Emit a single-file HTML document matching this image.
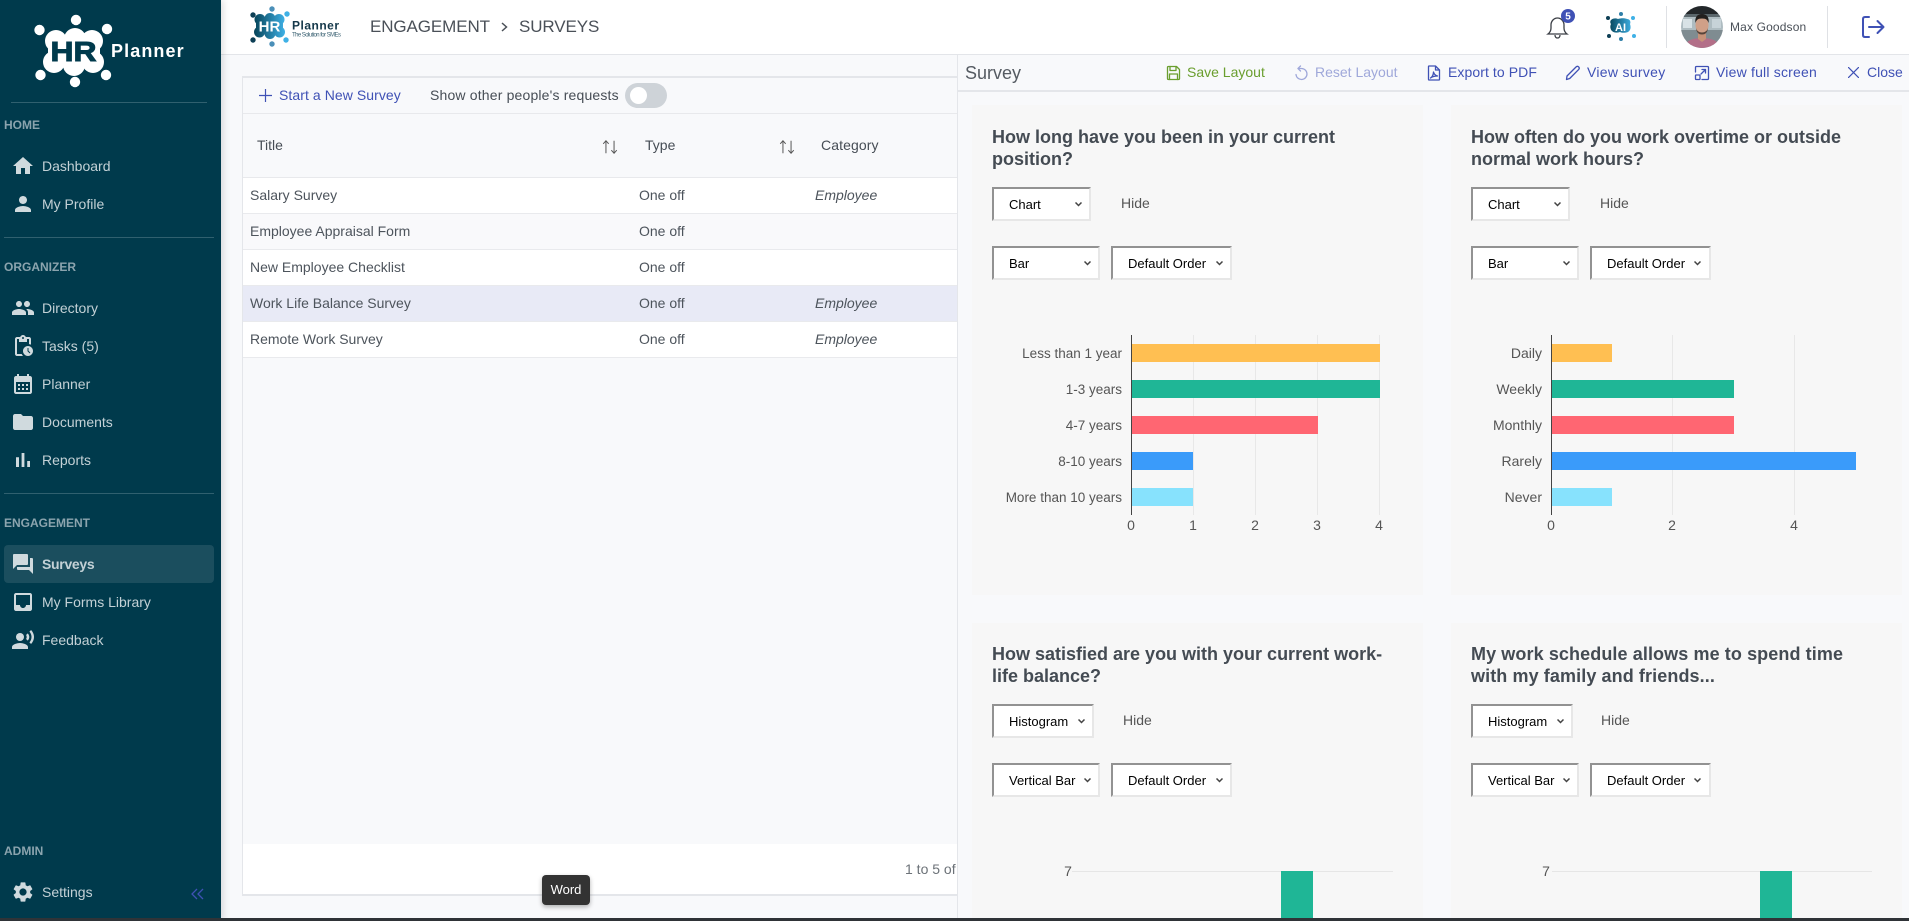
<!DOCTYPE html>
<html lang="en"><head><meta charset="utf-8"><title>Surveys</title>
<style>
html,body{margin:0;padding:0;width:1909px;height:921px;overflow:hidden;background:#f8f9fb;font-family:"Liberation Sans",Arial,sans-serif;}
.a{position:absolute}
.t{position:absolute;white-space:nowrap;line-height:20px;height:20px}
#side{left:0;top:0;width:221px;height:921px;background:#003a4c;box-shadow:2px 0 7px rgba(0,0,0,.14);z-index:5}
.lab{font-size:12px;font-weight:bold;color:#8ba4ae;left:4px}
.nav{font-size:14px;color:#c3d1d6;left:42px}
.ic{position:absolute;left:11px;width:24px;height:24px;fill:#d0dade}
.sep{position:absolute;height:1px;background:#30606f}
#head{left:221px;top:0;width:1688px;height:54px;background:#fff;border-bottom:1px solid #e3e5e9;z-index:3}
#tcard{left:242px;top:76px;width:716px;height:820px;background:#f8f9fb;border:solid #e4e6ea;border-width:2px 0 2px 1px;box-sizing:border-box}
.row{position:absolute;left:243px;width:714px;background:#fff;border-bottom:1px solid #e9eaed;box-sizing:border-box}
.cell{font-size:14px;color:#4d545c}
.act{font-size:14px;top:62px;color:#3f51b5}
.card{position:absolute;background:#f7f7f7;width:451px}
.q{position:absolute;font-size:18px;font-weight:bold;color:#444b53;line-height:22px;white-space:nowrap}
select{position:absolute;box-sizing:border-box;background:#fff;color:#000;font:13px "Liberation Sans",Arial,sans-serif;border:2px solid;border-color:#929292 #e7e7e7 #e7e7e7 #929292;border-radius:0;padding:0 0 0 15px;margin:0;outline:0;appearance:none;-webkit-appearance:none}
.ch{position:absolute;width:7px;height:5px;fill:none;stroke:#444;stroke-width:1.500}
.hide{font-size:14px;color:#555}
svg{display:block}
.tb{position:absolute;fill:none;stroke-width:1.3;stroke-linecap:round;stroke-linejoin:round}
</style></head><body>

<div id="side" class="a">
 <svg class="a" style="left:30px;top:12px" width="165" height="76" viewBox="0 0 165 76">
  <g fill="#fff">
   <circle cx="9.500" cy="18" r="5.200"/><circle cx="46" cy="8" r="5.200"/><circle cx="77" cy="17" r="5.200"/>
   <circle cx="76" cy="63" r="5.200"/><circle cx="45" cy="70" r="5.200"/><circle cx="10.500" cy="63" r="5.200"/>
   <circle cx="26" cy="29" r="11"/><circle cx="45" cy="27" r="11"/><circle cx="62" cy="29" r="11"/>
   <circle cx="24" cy="50" r="11"/><circle cx="44" cy="53" r="11"/><circle cx="63" cy="50" r="11"/>
   <rect x="18" y="28" width="52" height="24"/>
  </g>
  <text x="43.500" y="49" text-anchor="middle" font-family="Liberation Sans" font-weight="bold" font-size="28" fill="#003a4c" stroke="#003a4c" stroke-width="1" textLength="46" lengthAdjust="spacingAndGlyphs">HR</text>
  <text x="81" y="45" font-family="Liberation Sans" font-weight="bold" font-size="18" fill="#fff" letter-spacing="1.100">Planner</text>
 </svg>
 <div class="sep" style="left:11px;width:196px;top:102px"></div>

 <div class="t lab" style="top:115px">HOME</div>
 <svg class="ic" style="top:154px" viewBox="0 0 24 24"><path d="M10 20v-6h4v6h5v-8h3L12 3 2 12h3v8z"/></svg>
 <div class="t nav" style="top:156px">Dashboard</div>
 <svg class="ic" style="top:192px" viewBox="0 0 24 24"><path d="M12 12c2.210 0 4-1.790 4-4s-1.790-4-4-4-4 1.790-4 4 1.790 4 4 4zm0 2c-2.670 0-8 1.340-8 4v2h16v-2c0-2.660-5.330-4-8-4z"/></svg>
 <div class="t nav" style="top:194px">My Profile</div>
 <div class="sep" style="left:4px;width:210px;top:237px"></div>

 <div class="t lab" style="top:257px">ORGANIZER</div>
 <svg class="ic" style="top:296px" viewBox="0 0 24 24"><path d="M16 11c1.660 0 2.990-1.340 2.990-3S17.660 5 16 5c-1.660 0-3 1.340-3 3s1.340 3 3 3zm-8 0c1.660 0 2.990-1.340 2.990-3S9.660 5 8 5C6.340 5 5 6.340 5 8s1.340 3 3 3zm0 2c-2.330 0-7 1.170-7 3.500V19h14v-2.500c0-2.330-4.670-3.500-7-3.500zm8 0c-.29 0-.62.020-.97.050 1.160.84 1.970 1.970 1.970 3.450V19h6v-2.500c0-2.330-4.670-3.500-7-3.500z"/></svg>
 <div class="t nav" style="top:298px">Directory</div>
 <svg class="ic" style="top:334px" viewBox="0 0 24 24"><path d="M17,12c-2.760,0-5,2.240-5,5s2.240,5,5,5c2.760,0,5-2.240,5-5S19.760,12,17,12z M18.650,19.350l-2.150-2.150V14h1v2.790l1.850,1.850 L18.650,19.350z M18,3h-3.180C14.400,1.840,13.300,1,12,1S9.600,1.840,9.180,3H6C4.900,3,4,3.900,4,5v15c0,1.100,0.900,2,2,2h6.110 c-0.590-0.570-1.070-1.250-1.420-2H6V5h2v3h8V5h2v5.080c0.710,0.100,1.380,0.310,2,0.600V5C20,3.900,19.100,3,18,3z M12,5c-0.550,0-1-0.450-1-1 c0-0.550,0.450-1,1-1c0.550,0,1,0.450,1,1C13,4.550,12.550,5,12,5z"/></svg>
 <div class="t nav" style="top:336px">Tasks (5)</div>
 <svg class="ic" style="top:372px" viewBox="0 0 24 24"><path d="M19 4h-1V2h-2v2H8V2H6v2H5c-1.110 0-1.990.9-1.990 2L3 20c0 1.100.89 2 2 2h14c1.100 0 2-.9 2-2V6c0-1.100-.9-2-2-2zm0 16H5V10h14v10zM9 14H7v-2h2v2zm4 0h-2v-2h2v2zm4 0h-2v-2h2v2zm-8 4H7v-2h2v2zm4 0h-2v-2h2v2zm4 0h-2v-2h2v2z"/></svg>
 <div class="t nav" style="top:374px">Planner</div>
 <svg class="ic" style="top:410px" viewBox="0 0 24 24"><path d="M10 4H4c-1.100 0-1.990.9-1.990 2L2 18c0 1.100.9 2 2 2h16c1.100 0 2-.9 2-2V8c0-1.100-.9-2-2-2h-8l-2-2z"/></svg>
 <div class="t nav" style="top:412px">Documents</div>
 <svg class="ic" style="top:448px" viewBox="0 0 24 24"><path d="M5 9.200h3V19H5zM10.600 5h2.800v14h-2.800zm5.600 8H19v6h-2.800z"/></svg>
 <div class="t nav" style="top:450px">Reports</div>
 <div class="sep" style="left:4px;width:210px;top:493px"></div>

 <div class="t lab" style="top:513px">ENGAGEMENT</div>
 <div class="a" style="left:4px;top:545px;width:210px;height:38px;background:#1b4e5e;border-radius:4px"></div>
 <svg class="ic" style="top:552px" viewBox="0 0 24 24"><path d="M21 6h-2v9H6v2c0 .55.45 1 1 1h11l4 4V7c0-.55-.45-1-1-1zm-4 6V3c0-.55-.45-1-1-1H3c-.55 0-1 .45-1 1v14l4-4h10c.55 0 1-.45 1-1z"/></svg>
 <div class="t nav" style="top:554px;font-weight:bold;letter-spacing:-.3px">Surveys</div>
 <svg class="ic" style="top:590px" viewBox="0 0 24 24"><path d="M19 3H4.990c-1.110 0-1.980.89-1.980 2L3 19c0 1.100.88 2 1.990 2H19c1.100 0 2-.9 2-2V5c0-1.110-.9-2-2-2zm0 12h-4c0 1.660-1.350 3-3 3s-3-1.340-3-3H4.990V5H19v10z"/></svg>
 <div class="t nav" style="top:592px">My Forms Library</div>
 <svg class="ic" style="top:628px" viewBox="0 0 24 24"><circle cx="9" cy="9" r="4"/><path d="M9 15c-2.670 0-8 1.340-8 4v2h16v-2c0-2.660-5.330-4-8-4zm7.760-9.640l-1.680 1.690c.84 1.180.84 2.710 0 3.890l1.680 1.690c2.020-2.020 2.020-5.070 0-7.270zM20.070 2l-1.630 1.630c2.770 3.020 2.770 7.560 0 10.740L20.070 16c3.900-3.890 3.910-9.950 0-14z"/></svg>
 <div class="t nav" style="top:630px">Feedback</div>

 <div class="t lab" style="top:841px">ADMIN</div>
 <svg class="ic" style="top:880px" viewBox="0 0 24 24"><path d="M19.140 12.940c.04-.3.060-.61.060-.94 0-.32-.02-.64-.07-.94l2.030-1.580c.18-.14.23-.41.120-.61l-1.920-3.320c-.12-.22-.37-.29-.59-.22l-2.390.96c-.5-.38-1.030-.7-1.620-.94l-.36-2.540c-.04-.24-.24-.41-.48-.41h-3.840c-.24 0-.43.170-.47.410l-.36 2.540c-.59.240-1.130.570-1.620.940l-2.390-.96c-.22-.08-.47 0-.59.220L2.740 8.870c-.12.210-.08.470.12.610l2.030 1.580c-.05.3-.09.630-.09.940s.020.640.07.940l-2.030 1.580c-.18.140-.23.410-.12.610l1.920 3.320c.12.220.37.290.59.220l2.390-.96c.5.380 1.030.7 1.620.94l.36 2.540c.05.240.24.410.48.410h3.840c.24 0 .44-.17.47-.41l.36-2.540c.59-.24 1.130-.56 1.620-.94l2.390.96c.22.080.47 0 .59-.22l1.920-3.320c.12-.22.070-.47-.12-.61l-2.010-1.580zM12 15.600c-1.980 0-3.600-1.620-3.600-3.600s1.620-3.600 3.600-3.600 3.600 1.620 3.600 3.600-1.620 3.600-3.600 3.600z"/></svg>
 <div class="t nav" style="top:882px">Settings</div>
 <svg class="a" style="left:191px;top:888px" width="13" height="12" viewBox="0 0 13 12" fill="none" stroke="#3f51b5" stroke-width="1.300"><path d="M6 1L1 6l5 5M12 1L7 6l5 5"/></svg>
</div>

<div id="head" class="a">
 <svg class="a" style="left:27px;top:4px" width="100" height="46" viewBox="0 0 100 46">
  <defs><linearGradient id="g" gradientUnits="userSpaceOnUse" x1="6" x2="37" y1="0" y2="0"><stop offset="0" stop-color="#064459"/><stop offset="1" stop-color="#3fb1e6"/></linearGradient></defs>
  <circle cx="5" cy="11" r="2.700" fill="#0d3f55"/><circle cx="24" cy="5" r="2.700" fill="#4a8fb8"/><circle cx="39" cy="10" r="2.700" fill="#3fb1e6"/>
  <circle cx="38" cy="36" r="2.700" fill="#3fb1e6"/><circle cx="24" cy="40" r="2.700" fill="#4a8fb8"/><circle cx="5" cy="36" r="2.700" fill="#0d3f55"/>
  <g fill="url(#g)"><circle cx="12" cy="15.500" r="5.500"/><circle cx="22" cy="14.500" r="5.500"/><circle cx="31" cy="15.500" r="5.500"/><circle cx="11.500" cy="28" r="5.500"/><circle cx="22" cy="29.500" r="5.500"/><circle cx="31.500" cy="28" r="5.500"/><rect x="8" y="14" width="27" height="16"/></g>
  <text x="21.500" y="27.500" text-anchor="middle" font-family="Liberation Sans" font-weight="bold" font-size="15" fill="#fff">HR</text>
  <text x="44" y="25.500" font-family="Liberation Sans" font-weight="bold" font-size="12" fill="#14384a" letter-spacing=".5">Planner</text>
  <text x="44" y="32.500" font-family="Liberation Sans" font-size="6" fill="#3b6273" textLength="49">The Solution for SMEs</text>
 </svg>
 <div class="t" style="left:149px;top:17px;font-size:17px;letter-spacing:-.1px;color:#4a5058">ENGAGEMENT</div>
 <svg class="a" style="left:279px;top:21px" width="9" height="12" viewBox="0 0 9 12" fill="none" stroke="#4a5058" stroke-width="1.500"><path d="M2 2l4.500 4L2 10"/></svg>
 <div class="t" style="left:298px;top:17px;font-size:17px;letter-spacing:-.1px;color:#4a5058">SURVEYS</div>

 <svg class="a" style="left:1324px;top:14px" width="26" height="26" viewBox="0 0 26 26" fill="none" stroke="#3b3f46" stroke-width="1.300"><path d="M3 20c2-1.500 3-3 3-6v-3c0-4 3-7 6.500-7s6.500 3 6.500 7v3c0 3 1 4.500 3 6z"/><path d="M10 21c0 2 1.200 3 2.500 3s2.500-1 2.500-3"/></svg>
 <svg class="a" style="left:1339px;top:8px" width="16" height="16" viewBox="0 0 16 16"><circle cx="8" cy="8" r="7" fill="#3f51b5"/><text x="8" y="11.500" text-anchor="middle" font-family="Liberation Sans" font-weight="bold" font-size="10" fill="#fff">5</text></svg>
 <svg class="a" style="left:1383px;top:11px" width="34" height="32" viewBox="0 0 34 32">
  <defs><linearGradient id="g2" gradientUnits="userSpaceOnUse" x1="5" x2="28" y1="0" y2="0"><stop offset="0" stop-color="#064459"/><stop offset="1" stop-color="#3fb1e6"/></linearGradient></defs>
  <circle cx="4" cy="7" r="2" fill="#0d3f55"/><circle cx="17" cy="3" r="2" fill="#2f7fa8"/><circle cx="29" cy="7" r="2" fill="#3fb1e6"/><circle cx="30" cy="25" r="2" fill="#3fb1e6"/><circle cx="17" cy="28" r="2" fill="#2f7fa8"/><circle cx="5" cy="25" r="2" fill="#0d3f55"/>
  <path fill="url(#g2)" d="M7 9c2-2 5-2 7-1 3-1 7-1 9 0 3 0 4 3 3 5 1 3 1 6-2 8-3 1-6 1-8 0-3 1-6 1-8-1-2-2-2-5-1-7-1-1-1-3 0-4z"/>
  <text x="16.500" y="20" text-anchor="middle" font-family="Liberation Sans" font-weight="bold" font-size="11" fill="#fff">AI</text>
 </svg>
 <div class="a" style="left:1445px;top:6px;width:1px;height:42px;background:#dfe1e5"></div>
 <svg class="a" style="left:1460px;top:6px" width="42" height="42" viewBox="0 0 42 42">
  <defs><clipPath id="c"><circle cx="21" cy="21" r="21"/></clipPath></defs>
  <g clip-path="url(#c)">
   <rect width="42" height="42" fill="#aebcc1"/>
   <rect width="42" height="8" fill="#23272a"/>
   <rect x="0" y="8" width="42" height="3" fill="#5b676c"/>
   <rect x="2" y="13" width="9" height="9" fill="#d8e2e6"/><rect x="31" y="13" width="9" height="9" fill="#c7d3d8"/>
   <rect x="0" y="24" width="42" height="18" fill="#7f8c91"/>
   <path d="M3 42c1-7 8-10 18-10s17 3 18 10z" fill="#b36f88"/>
   <path d="M17 26h8v7l-4 3-4-3z" fill="#c69279"/>
   <ellipse cx="21" cy="19" rx="6.500" ry="9" fill="#d0a088"/>
   <path d="M14.500 17c-1-6 2-9 6.500-9s7.500 3 6.500 9c-1-3-2-4.500-6.500-4.500s-5.500 1.500-6.500 4.500z" fill="#23201e"/>
   <path d="M15 22c1.500 6 10.500 6 12 0-.5 5-3 6.500-6 6.500s-5.500-1.500-6-6.500z" fill="#57443a"/>
  </g>
 </svg>
 <div class="t" style="left:1509px;top:17px;font-size:12px;letter-spacing:.15px;color:#4a5058">Max Goodson</div>
 <div class="a" style="left:1606px;top:6px;width:1px;height:42px;background:#dfe1e5"></div>
 <svg class="a" style="left:1640px;top:15px" width="25" height="24" viewBox="0 0 25 24" fill="none" stroke="#3f51b5" stroke-width="2" stroke-linecap="round" stroke-linejoin="round"><path d="M8 2H4c-1.500 0-2 .8-2 2v16c0 1.200.5 2 2 2h4"/><path d="M8 12h14M16.500 6l6 6-6 6"/></svg>
</div>

<div id="tcard" class="a"></div>
<svg class="a" style="left:258px;top:88px" width="15" height="15" viewBox="0 0 15 15" stroke="#3f51b5" stroke-width="1.200"><path d="M7.500 1v13M1 7.500h13"/></svg>
<div class="t" style="left:279px;top:85px;font-size:14px;letter-spacing:.07px;color:#3f51b5">Start a New Survey</div>
<div class="t" style="left:430px;top:85px;font-size:14px;letter-spacing:.17px;color:#464d55">Show other people's requests</div>
<div class="a" style="left:625px;top:83px;width:42px;height:25px;border-radius:13px;background:#ced3d8"></div>
<div class="a" style="left:630px;top:87px;width:17px;height:17px;border-radius:50%;background:#fff"></div>
<div class="a" style="left:243px;top:113px;width:714px;height:1px;background:#e8e9ec"></div>
<div class="a" style="left:243px;top:177px;width:714px;height:1px;background:#e8e9ec"></div>
<div class="t" style="left:257px;top:135px;font-size:14px;color:#464d55">Title</div>
<div class="t" style="left:645px;top:135px;font-size:14px;color:#464d55">Type</div>
<div class="t" style="left:821px;top:135px;font-size:14px;letter-spacing:.1px;color:#464d55">Category</div>
<svg class="a" style="left:601px;top:138px" width="18" height="18" viewBox="0 0 20 18" fill="none" stroke="#555" stroke-width="1.100"><path d="M5.500 16V2.500M2.500 5.500l3-3.500 3 3.500M14.500 2v13.500M11.500 12.500l3 3.500 3-3.500"/></svg>
<svg class="a" style="left:778px;top:138px" width="18" height="18" viewBox="0 0 20 18" fill="none" stroke="#555" stroke-width="1.100"><path d="M5.500 16V2.500M2.500 5.500l3-3.500 3 3.500M14.500 2v13.500M11.500 12.500l3 3.500 3-3.500"/></svg>

<div class="row" style="top:178px;height:36px"></div>
<div class="row" style="top:214px;height:36px;background:#f9f9fb"></div>
<div class="row" style="top:250px;height:36px"></div>
<div class="row" style="top:286px;height:36px;background:#e8eaf6"></div>
<div class="row" style="top:322px;height:36px"></div>
<div class="t cell" style="left:250px;top:185px">Salary Survey</div><div class="t cell" style="left:639px;top:185px">One off</div><div class="t cell" style="left:815px;top:185px;font-style:italic">Employee</div>
<div class="t cell" style="left:250px;top:221px">Employee Appraisal Form</div><div class="t cell" style="left:639px;top:221px">One off</div>
<div class="t cell" style="left:250px;top:257px">New Employee Checklist</div><div class="t cell" style="left:639px;top:257px">One off</div>
<div class="t cell" style="left:250px;top:293px">Work Life Balance Survey</div><div class="t cell" style="left:639px;top:293px">One off</div><div class="t cell" style="left:815px;top:293px;font-style:italic">Employee</div>
<div class="t cell" style="left:250px;top:329px">Remote Work Survey</div><div class="t cell" style="left:639px;top:329px">One off</div><div class="t cell" style="left:815px;top:329px;font-style:italic">Employee</div>
<div class="a" style="left:243px;top:844px;width:714px;height:50px;background:#fff"></div>
<div class="t" style="left:905px;top:859px;font-size:14px;color:#6c7278">1 to 5 of</div>

<div class="a" style="left:957px;top:55px;width:952px;height:866px;background:#f8f9fb;border-left:1px solid #e4e6ea;box-sizing:border-box"></div>
<div class="a" style="left:957px;top:90px;width:952px;height:2px;background:#e4e6ea"></div>
<div class="t" style="left:965px;top:63px;font-size:18px;color:#555b62">Survey</div>

<svg class="tb" style="left:1166px;top:65px;stroke:#6a9e2e" width="15" height="16" viewBox="0 0 15 16"><path d="M2.500 1.500h8l3 3v9c0 .6-.4 1-1 1h-10c-.6 0-1-.4-1-1v-11c0-.6.4-1 1-1z"/><path d="M4 1.500v4h6v-4M3.500 14.500V9h8v5.500"/></svg>
<div class="t act" style="left:1187px;color:#6a9e2e">Save Layout</div>
<svg class="tb" style="left:1294px;top:65px;stroke:#9fa8da" width="15" height="16" viewBox="0 0 15 16"><path d="M6.500 1L4 3.500 6.500 6"/><path d="M4 3.500h3.500a5.500 5.500 0 1 1-5.500 6"/></svg>
<div class="t act" style="left:1315px;color:#9fa8da">Reset Layout</div>
<svg class="tb" style="left:1427px;top:65px;stroke:#3f51b5" width="14" height="16" viewBox="0 0 14 16"><path d="M2 1h6.500L12.500 5v9.500c0 .3-.2.5-.5.5H2c-.3 0-.5-.2-.5-.5v-13c0-.3.2-.5.5-.5zM8.500 1v4h4"/><path d="M3.500 13c2-1 3-4 3-6 .5 2 2 3.500 4 4-2 0-5 .5-7 2z"/></svg>
<div class="t act" style="left:1448px;letter-spacing:.08px">Export to PDF</div>
<svg class="tb" style="left:1565px;top:65px;stroke:#3f51b5" width="16" height="16" viewBox="0 0 16 16"><path d="M2 11L11 2c1-1 2-.8 2.700-.1s.8 1.700-.1 2.700L4.700 13.500 1.500 14.500z"/></svg>
<div class="t act" style="left:1587px;letter-spacing:.3px">View survey</div>
<svg class="tb" style="left:1694px;top:65px;stroke:#3f51b5" width="16" height="16" viewBox="0 0 16 16"><path d="M1.500 7V2.500c0-.6.4-1 1-1h11c.6 0 1 .4 1 1v11c0 .6-.4 1-1 1H8"/><path d="M7 9l4.500-4.500M8 4.500h3.500V8"/><rect x="1.500" y="10" width="4.500" height="4.500" rx=".5"/></svg>
<div class="t act" style="left:1716px;letter-spacing:.2px">View full screen</div>
<svg class="tb" style="left:1848px;top:67px;stroke:#3f51b5" width="11" height="11" viewBox="0 0 12 12"><path d="M.5.500l11 11M11.500.500l-11 11"/></svg>
<div class="t act" style="left:1867px">Close</div>

<div class="card" style="left:972px;top:105px;height:490px"></div>
<div class="card" style="left:1451px;top:105px;height:490px"></div>
<div class="card" style="left:972px;top:623px;height:298px"></div>
<div class="card" style="left:1451px;top:623px;height:298px"></div>

<div class="q" style="left:992px;top:126px">How long have you been in your current<br>position?</div>
<select style="left:992px;top:187px;width:99px;height:34px"><option>Chart</option></select>
<svg class="ch" style="left:1075px;top:202px" viewBox="0 0 7 5"><path d="M.5.500l3 3 3-3"/></svg>
<div class="t hide" style="left:1121px;top:193px">Hide</div>
<select style="left:992px;top:246px;width:108px;height:34px"><option>Bar</option></select>
<svg class="ch" style="left:1084px;top:261px" viewBox="0 0 7 5"><path d="M.5.500l3 3 3-3"/></svg>
<select style="left:1111px;top:246px;width:121px;height:34px"><option>Default Order</option></select>
<svg class="ch" style="left:1216px;top:261px" viewBox="0 0 7 5"><path d="M.5.500l3 3 3-3"/></svg>

<div class="q" style="left:1471px;top:126px">How often do you work overtime or outside<br>normal work hours?</div>
<select style="left:1471px;top:187px;width:99px;height:34px"><option>Chart</option></select>
<svg class="ch" style="left:1554px;top:202px" viewBox="0 0 7 5"><path d="M.5.500l3 3 3-3"/></svg>
<div class="t hide" style="left:1600px;top:193px">Hide</div>
<select style="left:1471px;top:246px;width:108px;height:34px"><option>Bar</option></select>
<svg class="ch" style="left:1563px;top:261px" viewBox="0 0 7 5"><path d="M.5.500l3 3 3-3"/></svg>
<select style="left:1590px;top:246px;width:121px;height:34px"><option>Default Order</option></select>
<svg class="ch" style="left:1694px;top:261px" viewBox="0 0 7 5"><path d="M.5.500l3 3 3-3"/></svg>

<div class="q" style="left:992px;top:643px">How satisfied are you with your current work-<br>life balance?</div>
<select style="left:992px;top:704px;width:102px;height:34px"><option>Histogram</option></select>
<svg class="ch" style="left:1078px;top:719px" viewBox="0 0 7 5"><path d="M.5.500l3 3 3-3"/></svg>
<div class="t hide" style="left:1123px;top:710px">Hide</div>
<select style="left:992px;top:763px;width:108px;height:34px"><option>Vertical Bar</option></select>
<svg class="ch" style="left:1084px;top:778px" viewBox="0 0 7 5"><path d="M.5.500l3 3 3-3"/></svg>
<select style="left:1111px;top:763px;width:121px;height:34px"><option>Default Order</option></select>
<svg class="ch" style="left:1216px;top:778px" viewBox="0 0 7 5"><path d="M.5.500l3 3 3-3"/></svg>

<div class="q" style="left:1471px;top:643px;letter-spacing:.1px">My work schedule allows me to spend time<br>with my family and friends...</div>
<select style="left:1471px;top:704px;width:102px;height:34px"><option>Histogram</option></select>
<svg class="ch" style="left:1557px;top:719px" viewBox="0 0 7 5"><path d="M.5.500l3 3 3-3"/></svg>
<div class="t hide" style="left:1601px;top:710px">Hide</div>
<select style="left:1471px;top:763px;width:108px;height:34px"><option>Vertical Bar</option></select>
<svg class="ch" style="left:1563px;top:778px" viewBox="0 0 7 5"><path d="M.5.500l3 3 3-3"/></svg>
<select style="left:1590px;top:763px;width:121px;height:34px"><option>Default Order</option></select>
<svg class="ch" style="left:1694px;top:778px" viewBox="0 0 7 5"><path d="M.5.500l3 3 3-3"/></svg>

<svg class="a" style="left:0;top:0;pointer-events:none" width="1909" height="921" viewBox="0 0 1909 921" font-family="Liberation Sans" font-size="13.500" fill="#555">
 <g stroke="#e8e8e8" stroke-width="1"><path d="M1193.500 335V515M1255.500 335V515M1317.500 335V515M1379.500 335V515M1672.500 335V515M1794.500 335V515"/></g>
 <rect x="1131" y="344" width="249" height="18" fill="#ffbf52"/><rect x="1131" y="380" width="249" height="18" fill="#1fb696"/><rect x="1131" y="416" width="187" height="18" fill="#ff6672"/><rect x="1131" y="452" width="62" height="18" fill="#3a9bfa"/><rect x="1131" y="488" width="62" height="18" fill="#87e2fd"/>
 <path d="M1131.500 335V515" stroke="#444" stroke-width="1"/>
 <g text-anchor="end"><text x="1122" y="358">Less than 1 year</text><text x="1122" y="394">1-3 years</text><text x="1122" y="430">4-7 years</text><text x="1122" y="466">8-10 years</text><text x="1122" y="502">More than 10 years</text></g>
 <g text-anchor="middle" font-size="14"><text x="1131" y="530">0</text><text x="1193" y="530">1</text><text x="1255" y="530">2</text><text x="1317" y="530">3</text><text x="1379" y="530">4</text></g>

 <rect x="1551" y="344" width="61" height="18" fill="#ffbf52"/><rect x="1551" y="380" width="183" height="18" fill="#1fb696"/><rect x="1551" y="416" width="183" height="18" fill="#ff6672"/><rect x="1551" y="452" width="305" height="18" fill="#3a9bfa"/><rect x="1551" y="488" width="61" height="18" fill="#87e2fd"/>
 <path d="M1551.500 335V515" stroke="#444" stroke-width="1"/>
 <g text-anchor="end" font-size="14"><text x="1542" y="358">Daily</text><text x="1542" y="394">Weekly</text><text x="1542" y="430">Monthly</text><text x="1542" y="466">Rarely</text><text x="1542" y="502">Never</text></g>
 <g text-anchor="middle" font-size="14"><text x="1551" y="530">0</text><text x="1672" y="530">2</text><text x="1794" y="530">4</text></g>

 <path d="M1072 871.500H1393M1552 871.500H1872" stroke="#e6e6e6"/>
 <text x="1068" y="876" text-anchor="middle" font-size="14">7</text><text x="1546" y="876" text-anchor="middle" font-size="14">7</text>
 <rect x="1281" y="871" width="32" height="50" fill="#1fb696"/><rect x="1760" y="871" width="32" height="50" fill="#1fb696"/>
</svg>

<div class="a" style="left:542px;top:875px;width:48px;height:30px;background:#333;border-radius:4px;box-shadow:0 2px 5px rgba(0,0,0,.3);color:#fff;font-size:13px;line-height:30px;text-align:center;z-index:6">Word</div>
<div class="a" style="left:0;top:918px;width:1909px;height:3px;background:#2f3337;z-index:7"></div>
</body></html>
